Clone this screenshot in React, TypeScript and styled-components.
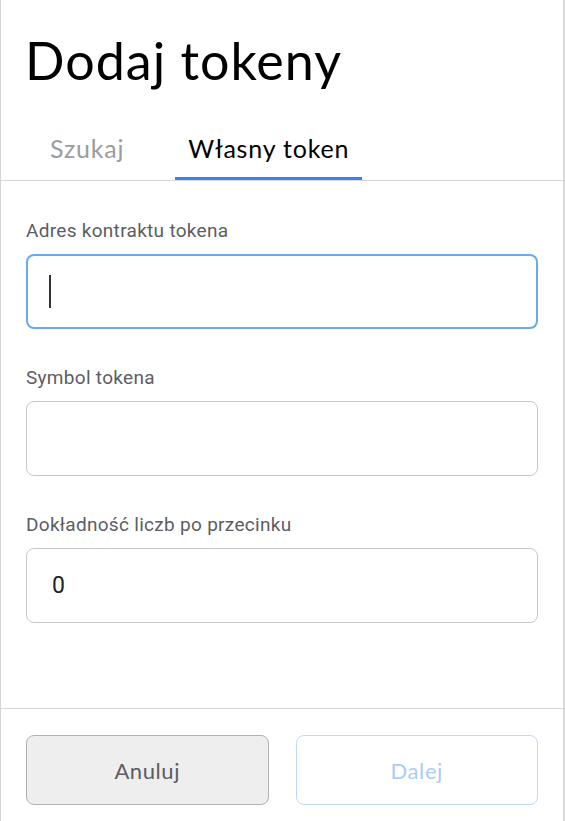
import React, { useState } from 'react'
import styled, { createGlobalStyle } from 'styled-components'

const GlobalStyle = createGlobalStyle`
  html, body {
    margin: 0;
    padding: 0;
    background: #ffffff;
  }
  * {
    box-sizing: border-box;
  }
`

const Page = styled.div`
  width: 565px;
  min-height: 821px;
  display: flex;
  flex-direction: column;
  background: #ffffff;
  border-left: 1px solid #d4d4d4;
  border-right: 2px solid #d9d9d9;
`

const Title = styled.h1`
  margin: 29px 0 0;
  padding-left: 24px;
  font-family: Lato, "Open Sans", sans-serif;
  font-weight: 400;
  font-size: 52px;
  letter-spacing: 1px;
  line-height: 1.2;
  color: #000000;
`

const TabList = styled.div`
  display: flex;
  gap: 38px;
  margin-top: 42px;
  padding-left: 36px;
  border-bottom: 1px solid #d6d9dc;
`

const Tab = styled.button<{ $active?: boolean }>`
  background: none;
  border: none;
  border-bottom: 3px solid ${p => (p.$active ? '#3f80e0' : 'transparent')};
  padding: 0 13px 14px;
  margin: 0;
  font-family: Lato, "Open Sans", sans-serif;
  font-size: 25px;
  letter-spacing: 0.8px;
  line-height: 1.2;
  color: ${p => (p.$active ? '#000000' : '#9b9c9f')};
  cursor: pointer;
`

const Form = styled.div`
  display: flex;
  flex-direction: column;
  gap: 38px;
  padding: 39px 25px 0;
`

const Field = styled.label`
  display: flex;
  flex-direction: column;
  gap: 11px;
`

const Label = styled.span`
  font-family: Roboto, "Liberation Sans", sans-serif;
  font-size: 19px;
  letter-spacing: 0.3px;
  line-height: 1.2;
  color: #5c5d62;
`

const InputWrap = styled.div`
  position: relative;
`

const Input = styled.input<{ $focused?: boolean }>`
  width: 100%;
  height: 75px;
  padding: 0 25px;
  border: ${p => (p.$focused ? '2px solid #6aa9f0' : '1px solid #c3c6ca')};
  border-radius: 8px;
  outline: none;
  background: #ffffff;
  font-family: Roboto, "Liberation Sans", sans-serif;
  font-size: 23px;
  color: #222222;
  caret-color: transparent;
`

const Caret = styled.span`
  position: absolute;
  left: 23px;
  top: 21px;
  width: 2px;
  height: 33px;
  background: #333333;
`

const Footer = styled.div`
  margin-top: auto;
  display: flex;
  gap: 27px;
  padding: 26px 25px 16px;
  border-top: 1px solid #d6d9dc;
`

const Button = styled.button<{ $variant: 'default' | 'primary' }>`
  flex: 1;
  height: 70px;
  border-radius: 8px;
  font-family: Lato, "Open Sans", sans-serif;
  font-size: 22px;
  letter-spacing: 0.6px;
  cursor: pointer;
  background: ${p => (p.$variant === 'default' ? '#eeeeee' : '#ffffff')};
  border: 1px solid ${p => (p.$variant === 'default' ? '#b2b2b2' : '#bcd9f7')};
  color: ${p => (p.$variant === 'default' ? '#5b5d63' : '#a9cdf4')};
`

export default function App() {
  const [tab, setTab] = useState<'search' | 'custom'>('custom')
  const [address, setAddress] = useState('')
  const [symbol, setSymbol] = useState('')
  const [decimals, setDecimals] = useState('0')

  return (
    <>
      <GlobalStyle />
      <Page>
        <Title>Dodaj tokeny</Title>
        <TabList>
          <Tab $active={tab === 'search'} onClick={() => setTab('search')}>Szukaj</Tab>
          <Tab $active={tab === 'custom'} onClick={() => setTab('custom')}>Własny token</Tab>
        </TabList>
        <Form>
          <Field>
            <Label>Adres kontraktu tokena</Label>
            <InputWrap>
              <Input $focused value={address} onChange={e => setAddress(e.target.value)} />
              {address === '' && <Caret />}
            </InputWrap>
          </Field>
          <Field>
            <Label>Symbol tokena</Label>
            <InputWrap>
              <Input value={symbol} onChange={e => setSymbol(e.target.value)} />
            </InputWrap>
          </Field>
          <Field>
            <Label>Dokładność liczb po przecinku</Label>
            <InputWrap>
              <Input value={decimals} onChange={e => setDecimals(e.target.value)} />
            </InputWrap>
          </Field>
        </Form>
        <Footer>
          <Button $variant="default">Anuluj</Button>
          <Button $variant="primary" disabled>Dalej</Button>
        </Footer>
      </Page>
    </>
  )
}
